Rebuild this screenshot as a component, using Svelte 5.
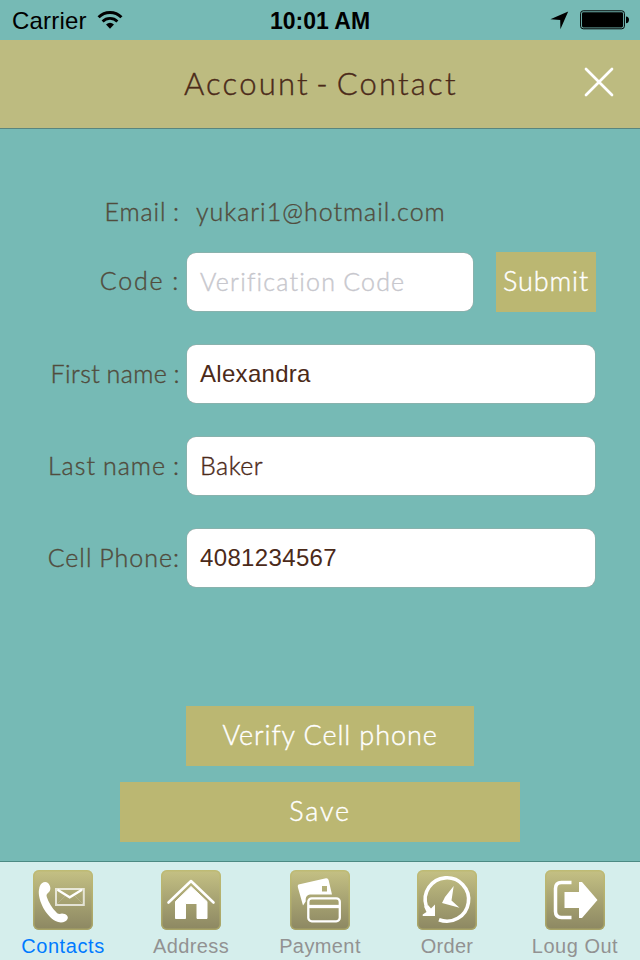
<script>
  const fields = [
    { label: 'First name :', value: 'Alexandra', font: 'sans', spacing: 0.3, labelSpacing: 0.45 },
    { label: 'Last name :', value: 'Baker', font: 'geo', spacing: 0.5, labelSpacing: 1.05 },
    { label: 'Cell Phone:', value: '4081234567', font: 'sans', spacing: 0.35, labelSpacing: 1 }
  ];
  const tabs = [
    { id: 'contacts', label: 'Contacts', active: true, spacing: 0.6 },
    { id: 'address', label: 'Address', spacing: 0.4 },
    { id: 'payment', label: 'Payment', spacing: 0.4 },
    { id: 'order', label: 'Order', spacing: 0.25 },
    { id: 'logout', label: 'Loug Out', spacing: 0.5 }
  ];
</script>

<div class="screen">
  <div class="status">
    <div class="carrier">
      <span>Carrier</span>
      <svg width="26" height="20" viewBox="0 0 26 20">
        <path d="M1.6 7.2A16 16 0 0 1 24.4 7.2" fill="none" stroke="#000" stroke-width="3" />
        <path d="M5.6 11.4A10.5 10.5 0 0 1 20.4 11.4" fill="none" stroke="#000" stroke-width="2.8" />
        <path d="M9 14.5Q13 11.2 17 14.5L13 18.8Z" />
      </svg>
    </div>
    <div class="clock">10:01 AM</div>
    <div class="indicators">
      <svg width="19" height="19" viewBox="0 0 19 19"><path d="M18.2 .5L10.4 18.2L10.2 8.9L.4 8.2Z" /></svg>
      <svg width="50" height="20" viewBox="0 0 50 20">
        <rect x=".6" y=".8" width="43.8" height="18" rx="2.6" fill="none" stroke="#000" stroke-width="1" />
        <rect x="2" y="2.2" width="41" height="15.2" rx="1.3" />
        <path d="M46 6.5C50 6.5 50 13.2 46 13.2Z" />
      </svg>
    </div>
  </div>

  <header>
    <h1>Account - Contact</h1>
    <button class="close" aria-label="Close">
      <svg width="30" height="30" viewBox="0 0 30 30">
        <path d="M2 2L28 28M28 2L2 28" stroke="#fff" stroke-width="2.7" stroke-linecap="round" />
      </svg>
    </button>
  </header>

  <main>
    <div class="row email">
      <span class="label" style:letter-spacing="0.9px">Email :</span>
      <span class="plain">yukari1@hotmail.com</span>
    </div>
    <div class="row code">
      <span class="label" style:letter-spacing="1.85px">Code :</span>
      <div class="box short"><span class="hint">Verification Code</span></div>
      <button class="gold submit">Submit</button>
    </div>
    {#each fields as f}
      <div class="row field">
        <span class="label" style:letter-spacing="{f.labelSpacing}px">{f.label}</span>
        <div class="box"><span class={f.font} style:letter-spacing="{f.spacing}px">{f.value}</span></div>
      </div>
    {/each}
    <button class="gold verify">Verify Cell phone</button>
    <button class="gold save">Save</button>
  </main>

  <nav>
    {#each tabs as t}
      <div class="tab" class:active={t.active}>
        <div class="tile">
          <svg width="60" height="60" viewBox="0 0 60 60" fill="#fff">
            {#if t.id === 'contacts'}
              <path d="M6.500 17C8 12.500 12 10.800 15 13C18 16 18 20 16 22C14 24 13 24.500 13.800 27C15.500 32 19 38 23.500 42.500C25.500 44.500 27 44 29 43.500C33 43.500 36 46.500 34.500 49C33 52.500 27 53.500 22.500 51C13 46 5.200 31 5.800 21Z" />
              <g fill="none" stroke="#fff">
                <rect x="23" y="19" width="27.800" height="16" stroke-width="2" opacity=".7" />
                <path d="M24.500 19.800L36.700 27.300L49 19.800" stroke-width="2.300" />
                <path d="M24 34L32 26M50 34L42 26" stroke-width=".6" opacity=".25" />
              </g>
            {:else if t.id === 'address'}
              <path d="M7.500 32.500L30 11L52.500 32.500" fill="none" stroke="#fff" stroke-width="2.600" stroke-linecap="round" stroke-linejoin="round" />
              <path d="M30 16.500L46 31.500V48.500H36V33.500H24.500V48.500H14.500V31.500Z" stroke="#fff" stroke-linejoin="round" />
            {:else if t.id === 'payment'}
              <path fill-rule="evenodd" d="M8.500 14.500L36 8.300Q38 8 38.600 10L42 24.500H20Q16 25 15.700 29V31.500L13 35.500L7.800 17Q7.500 15 8.500 14.500ZM32 16V21.500H37V16Z" />
              <rect x="18.300" y="28.300" width="31.500" height="23" rx="3.500" fill="none" stroke="#fff" stroke-width="2.300" />
              <path d="M19 36.500H49" stroke="#fff" stroke-width="3.300" />
            {:else if t.id === 'order'}
              <path d="M9.200 36A21.700 21.700 0 1 1 22 49.700" fill="none" stroke="#fff" stroke-width="3.600" />
              <path d="M18 34.500V46H5.700V44.500L9.500 42L7 36.500L11 35L14 38.500Z" />
              <path d="M36.700 16L34.500 30.500L42.500 37.800L25 33L28 27Z" />
            {:else}
              <path d="M26.500 12.400H16.500Q10.500 12.400 10.500 18.500V41.500Q10.500 47.400 16.500 47.400H26.500" fill="none" stroke="#fff" stroke-width="3.500" />
              <path d="M19.500 22H34V12H37L52.500 30L37 48H34V38H19.500Z" />
            {/if}
          </svg>
        </div>
        <span style:letter-spacing="{t.spacing}px">{t.label}</span>
      </div>
    {/each}
  </nav>
</div>

<style>
  :global(body) { margin: 0; }
  .screen {
    width: 640px; height: 960px; display: flex; flex-direction: column;
    background: #76bab5; font-family: "Liberation Sans", Arial, sans-serif; overflow: hidden;
  }
  button { border: 0; padding: 0; margin: 0; background: none; font: inherit; }
  svg { display: block; }
  h1, .label, .plain, .hint, .geo, .gold {
    font-family: "Century Gothic", Lato, sans-serif; font-weight: 300; white-space: nowrap;
    font-variant-ligatures: none; -webkit-text-stroke: .4px currentColor;
  }
  .status { height: 40px; display: grid; grid-template-columns: 1fr 1fr 1fr; align-items: center; font-size: 24px; }
  .carrier { display: flex; align-items: center; gap: 10px; padding-left: 12px; letter-spacing: .2px; }
  .carrier span, .clock { padding-top: 2px; }
  .clock { text-align: center; font-weight: 700; font-size: 23px; }
  .indicators { display: flex; justify-content: flex-end; align-items: center; gap: 11px; padding-right: 10px; }
  header {
    height: 84px; flex: none; background: #bdbb80; border-bottom: 1px solid #58857f;
    display: flex; align-items: center; justify-content: space-between; padding: 0 26px 4px 184px;
  }
  h1 { margin: 0; font-size: 31px; line-height: 40px; color: #4b2a19; letter-spacing: 2.2px; word-spacing: -4px; padding-top: 2px; }
  main { flex: 1; padding-top: 64px; display: flex; flex-direction: column; }
  .row { display: flex; align-items: center; }
  .label { width: 180px; margin-right: 7px; padding-bottom: 2px; text-align: right; font-size: 25px; color: #514c3d; word-spacing: -1px; }
  .plain { margin-left: 9px; padding-bottom: 2px; font-size: 25px; color: #514c3d; letter-spacing: 1px; }
  .email { height: 38px; }
  .code { height: 60px; margin-top: 21px; }
  .code .label { padding-bottom: 4px; }
  .box {
    width: 408px; height: 58px; box-sizing: border-box; padding-left: 13px; border-radius: 9px;
    background: #fff; box-shadow: 0 0 0 .5px #9aa9a6; display: flex; align-items: center; color: #4b2a19;
  }
  .short { width: 286px; }
  .hint { font-size: 25px; color: #c7c7cd; letter-spacing: 1.2px; word-spacing: -1px; padding-bottom: 3px; }
  .geo { font-size: 25px; padding-bottom: 3px; }
  .sans { font-size: 24px; }
  .gold { background: #bbb772; color: #fff; height: 60px; font-size: 27px; letter-spacing: .9px; padding-bottom: 4px; }
  .submit { width: 100px; margin-left: 23px; }
  .field { height: 58px; margin-top: 34px; }
  .code + .field { margin-top: 33px; }
  .verify { width: 288px; margin: 119px 0 0 186px; }
  .save { width: 400px; margin: 16px 0 0 120px; letter-spacing: 1.8px; }
  nav { height: 98px; flex: none; display: flex; background: #d5eeec; border-top: 1px solid #4c8a83; }
  .tab { width: 126px; margin-right: 2px; display: flex; flex-direction: column; align-items: center; padding-top: 8px; font-size: 20px; color: #929292; flex: none; }
  .tab:nth-child(3) { width: 128px; margin-right: 0; }
  .active { color: #007aff; }
  .tile { border-radius: 6px; background: linear-gradient(#c5c184, #aaa674 45%, #8c8762); box-shadow: inset 0 0 0 1.5px #bbb76a99; }
  .tab span { line-height: 24px; margin-top: 4px; white-space: nowrap; }
</style>
